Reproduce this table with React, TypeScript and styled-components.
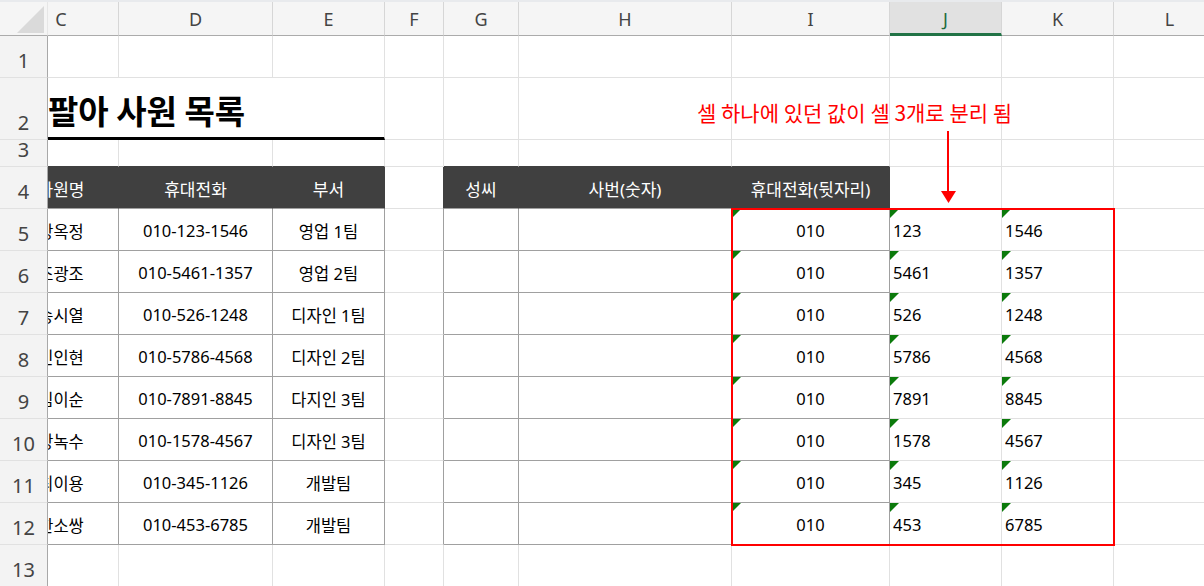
import React from 'react';
import styled, { createGlobalStyle, css } from 'styled-components';

const GlobalStyle = createGlobalStyle`
  html, body { margin: 0; padding: 0; background: #ffffff; overflow: hidden; }
  body { font-family: "Noto Sans", "Noto Sans CJK KR", sans-serif; }
`;

const GRID = '#e1e1e1';
const TABLE = '#a0a0a0';
const DARK = '#404040';

const tracks = css`
  display: grid;
  grid-template-columns: 48px 71px 154px 112px 59px 75px 213px 158px 112px 112px 112px;
  grid-template-rows: 34px 42px 62px 27px 42px repeat(8, 42px) 42px;
`;

const Viewport = styled.div`
  width: 1204px;
  height: 586px;
  overflow: hidden;
  position: relative;
`;

const Sheet = styled.div`
  ${tracks};
  position: relative;
  width: 1226px;
  border-top: 2px solid #e8eaed;
  background: #ffffff;
`;

const Overlay = styled.div`
  ${tracks};
  position: absolute;
  inset: 0;
  pointer-events: none;
  z-index: 2;
`;

const Corner = styled.div`
  box-sizing: border-box;
  display: flex;
  justify-content: flex-end;
  align-items: flex-end;
  padding: 0 3px 2px 0;
  background: #f5f5f5;
  border-right: 1px solid #e6e6e6;
  border-bottom: 1px solid #ababab;
`;

const CornerMark = styled.div`
  width: 27px;
  height: 27px;
  background: #dadada;
  clip-path: polygon(100% 0, 100% 100%, 0 100%);
`;

const ColHead = styled.div<{ $active?: boolean }>`
  box-sizing: border-box;
  display: flex;
  align-items: center;
  justify-content: center;
  overflow: hidden;
  background: ${p => (p.$active ? '#e1e1e1' : '#f5f5f5')};
  border-right: 1px solid #d6d6d6;
  border-bottom: ${p => (p.$active ? '3px solid #217346' : '1px solid #ababab')};
  color: ${p => (p.$active ? '#1f6b3d' : '#444444')};
  font-family: "Noto Sans", sans-serif;
  font-size: 18px;
  padding-top: ${p => (p.$active ? '2px' : '0')};
`;

const RowHead = styled.div`
  box-sizing: border-box;
  display: flex;
  align-items: flex-end;
  justify-content: center;
  padding-bottom: 6px;
  background: #f3f3f3;
  border-right: 1px solid #a8a8a8;
  border-bottom: 1px solid #e1e1e1;
  color: #444444;
  font-family: "Noto Sans", sans-serif;
  font-size: 20px;
  line-height: 20px;
`;

const Cell = styled.div<{
  $r?: string;
  $b?: string;
  $bg?: string;
  $left?: boolean;
  $head?: boolean;
  $flag?: boolean;
}>`
  box-sizing: border-box;
  position: relative;
  display: flex;
  align-items: center;
  justify-content: ${p => (p.$left ? 'flex-start' : 'center')};
  padding: 2px 0 0 ${p => (p.$left ? '3px' : '0')};
  overflow: hidden;
  white-space: nowrap;
  background: ${p => p.$bg || 'transparent'};
  border-right: 1px solid ${p => p.$r || GRID};
  border-bottom: 1px solid ${p => p.$b || GRID};
  color: ${p => (p.$head ? '#ffffff' : '#000000')};
  font-size: ${p => (p.$head ? '17px' : '16.5px')};
  font-family: "Noto Sans", "Noto Sans CJK KR", sans-serif;

  &::before {
    content: '';
    display: ${p => (p.$flag ? 'block' : 'none')};
    position: absolute;
    top: 0;
    left: 0;
    width: 0;
    height: 0;
    border-top: 9px solid #0b7a0b;
    border-right: 9px solid transparent;
  }
`;

const Shifted = styled.div`
  flex: 0 0 114px;
  margin-left: -44px;
  display: flex;
  justify-content: center;
`;

const TitleCell = styled.div`
  grid-column: span 3;
  box-sizing: border-box;
  display: flex;
  align-items: flex-end;
  padding: 0 0 7px 0;
  border-right: 1px solid ${GRID};
  border-bottom: 3px solid #000000;
  font-family: "Noto Sans CJK KR", sans-serif;
  font-weight: 700;
  font-size: 33px;
  line-height: 40px;
  color: #000000;
  white-space: nowrap;
  overflow: hidden;
`;

const Highlight = styled.div`
  grid-column: 8 / 11;
  grid-row: 6 / 14;
  margin: -1px;
  border: 2px solid #ff0000;
`;

const Note = styled.div`
  position: absolute;
  left: 697px;
  top: 97px;
  color: #ff0000;
  font-family: "Noto Sans CJK KR", sans-serif;
  font-size: 21px;
  line-height: 26px;
  white-space: nowrap;
`;

const ArrowBox = styled.svg`
  position: absolute;
  left: 940px;
  top: 129px;
`;

type RowData = [string, string, string, string, string];

const data: RowData[] = [
  ['장옥정', '010-123-1546', '영업 1팀', '123', '1546'],
  ['조광조', '010-5461-1357', '영업 2팀', '5461', '1357'],
  ['송시열', '010-526-1248', '디자인 1팀', '526', '1248'],
  ['민인현', '010-5786-4568', '디자인 2팀', '5786', '4568'],
  ['김이순', '010-7891-8845', '다지인 3팀', '7891', '8845'],
  ['장녹수', '010-1578-4567', '디자인 3팀', '1578', '4567'],
  ['최이용', '010-345-1126', '개발팀', '345', '1126'],
  ['한소쌍', '010-453-6785', '개발팀', '453', '6785'],
];

const letters = ['C', 'D', 'E', 'F', 'G', 'H', 'I', 'J', 'K', 'L'];

const EmptyRow: React.FC<{ n: number }> = ({ n }) => (
  <>
    <RowHead>{n}</RowHead>
    {letters.map(l => (
      <Cell key={l} />
    ))}
  </>
);

export default function App() {
  return (
    <Viewport>
      <GlobalStyle />
      <Sheet>
        <Corner>
          <CornerMark />
        </Corner>
        {letters.map(l => (
          <ColHead key={l} $active={l === 'J'}>
            {l === 'C' ? <Shifted>{l}</Shifted> : l}
          </ColHead>
        ))}

        <EmptyRow n={1} />

        <RowHead>2</RowHead>
        <TitleCell>팔아 사원 목록</TitleCell>
        {letters.slice(3).map(l => (
          <Cell key={l} />
        ))}

        <RowHead>3</RowHead>
        <Cell $b={DARK} />
        <Cell $b={DARK} />
        <Cell $b={DARK} />
        <Cell />
        <Cell $b={DARK} />
        <Cell $b={DARK} />
        <Cell $b={DARK} />
        <Cell />
        <Cell />
        <Cell />

        <RowHead>4</RowHead>
        <Cell $head $bg={DARK} $r={DARK} $b={TABLE}>
          <Shifted>사원명</Shifted>
        </Cell>
        <Cell $head $bg={DARK} $r={DARK} $b={TABLE}>휴대전화</Cell>
        <Cell $head $bg={DARK} $r={DARK} $b={TABLE}>부서</Cell>
        <Cell $r={DARK} />
        <Cell $head $bg={DARK} $r={DARK} $b={TABLE}>성씨</Cell>
        <Cell $head $bg={DARK} $r={DARK} $b={TABLE}>사번(숫자)</Cell>
        <Cell $head $bg={DARK} $r={DARK} $b={TABLE}>휴대전화(뒷자리)</Cell>
        <Cell />
        <Cell />
        <Cell />

        {data.map((row, i) => (
          <React.Fragment key={i}>
            <RowHead>{i + 5}</RowHead>
            <Cell $r={TABLE} $b={TABLE}>
              <Shifted>{row[0]}</Shifted>
            </Cell>
            <Cell $r={TABLE} $b={TABLE}>{row[1]}</Cell>
            <Cell $r={TABLE} $b={TABLE}>{row[2]}</Cell>
            <Cell $r={TABLE} />
            <Cell $r={TABLE} $b={TABLE} />
            <Cell $r={TABLE} $b={TABLE} />
            <Cell $r={TABLE} $b={TABLE} $flag>010</Cell>
            <Cell $left $flag>{row[3]}</Cell>
            <Cell $left $flag>{row[4]}</Cell>
            <Cell />
          </React.Fragment>
        ))}

        <EmptyRow n={13} />

        <Overlay>
          <Highlight />
          <Note>셀 하나에 있던 값이 셀 3개로 분리 됨</Note>
          <ArrowBox width="17" height="73" viewBox="0 0 17 73">
            <rect x="7" y="0" width="2" height="61" fill="#ff0000" />
            <polygon points="1,60 16,60 8.5,72" fill="#ff0000" />
          </ArrowBox>
        </Overlay>
      </Sheet>
    </Viewport>
  );
}
